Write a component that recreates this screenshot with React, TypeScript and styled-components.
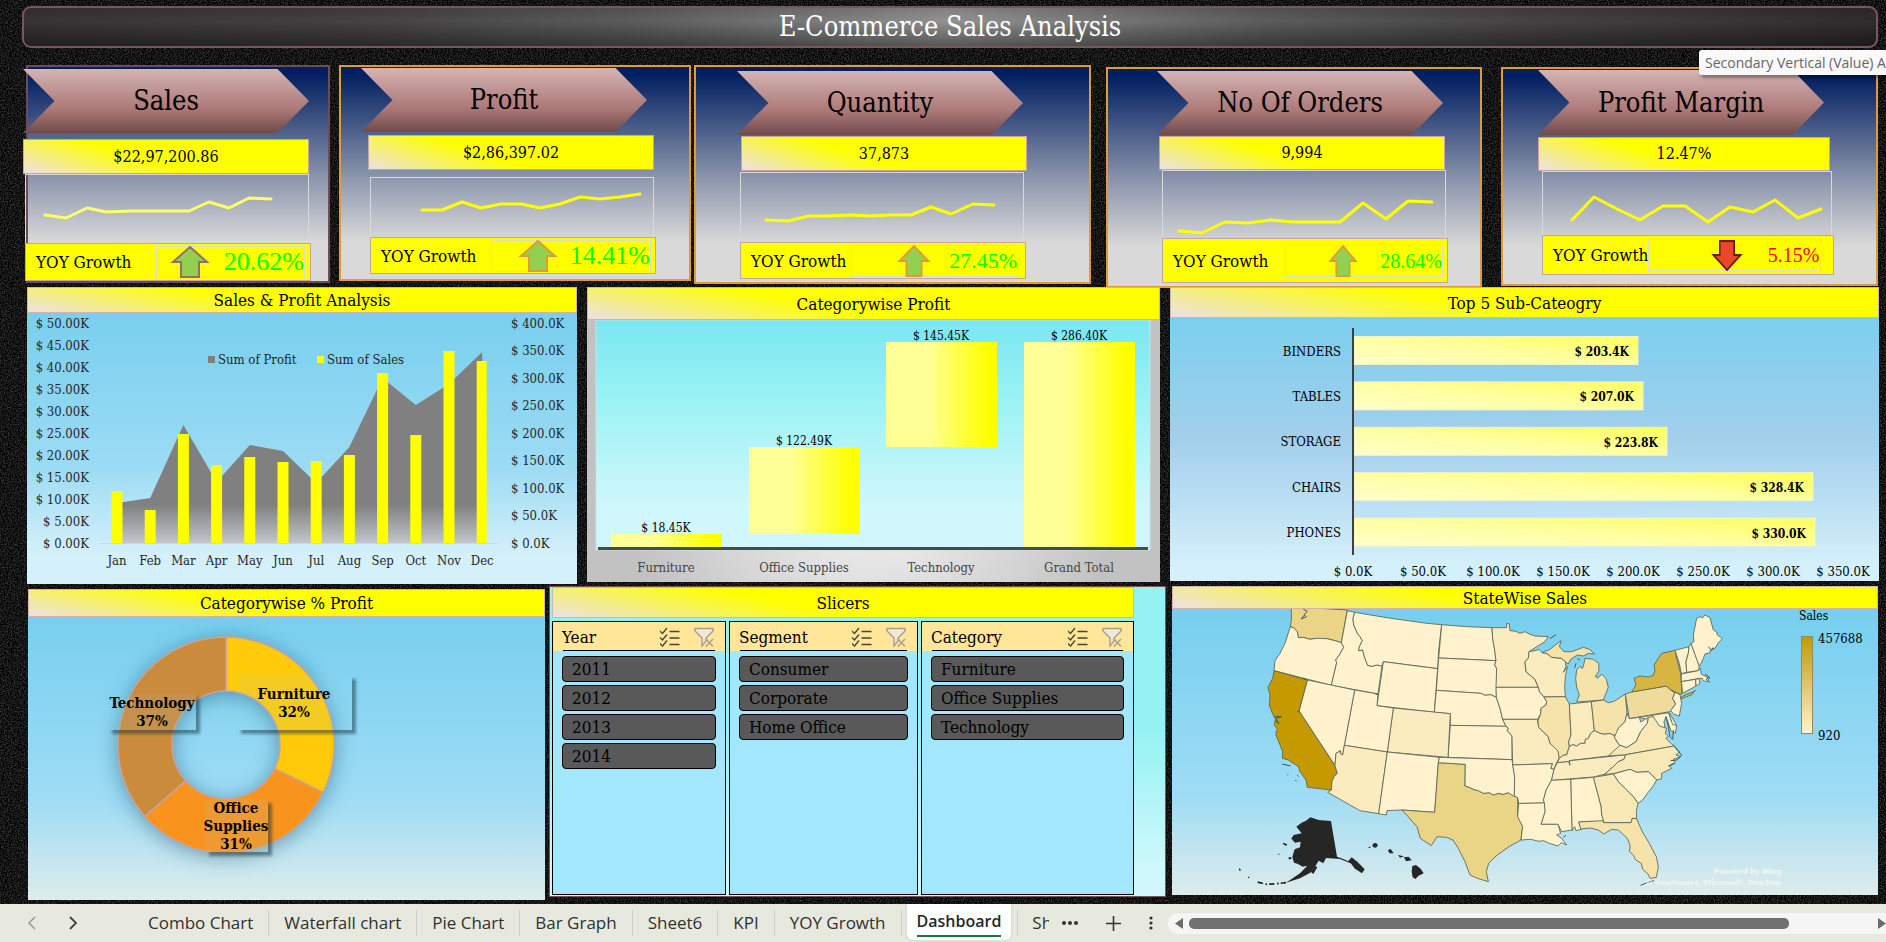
import React from "react";
import styled, { createGlobalStyle, css } from "styled-components";

const slab = `"DejaVu Serif Condensed", "DejaVu Serif", serif`;
const sans = `"Open Sans", "Noto Sans", sans-serif`;

const GlobalStyle = createGlobalStyle`
  *, *::before, *::after { box-sizing: border-box; }
  body { margin: 0; background: #131313; font-family: ${slab}; color: #000; }
  button { font: inherit; color: inherit; border: 0; padding: 0; background: none; cursor: pointer; }
  h1, h2, h3, p { margin: 0; font-weight: 400; }
  svg { display: block; }
  svg text { font-family: ${slab}; dominant-baseline: central; }
`;

const Page = styled.div`
  position: relative;
  min-height: 100vh;
  display: flex;
  flex-direction: column;
  padding-top: 6px;
  overflow: hidden;
  isolation: isolate;
`;

const Texture = styled.svg`
  position: absolute;
  inset: 0;
  width: 100%;
  height: 100%;
  z-index: -1;
`;

const Banner = styled.h1`
  height: 42px;
  margin: 0 8px 17px 22px;
  display: flex;
  align-items: center;
  justify-content: center;
  border: 2px solid #7d5559;
  border-radius: 9px;
  color: #fff;
  font-size: 27px;
  line-height: 32px;
  background:
    linear-gradient(180deg, rgba(0, 0, 0, 0.12), rgba(0, 0, 0, 0) 35%, rgba(0, 0, 0, 0.4)),
    linear-gradient(90deg, #353334, #434142 18%, #5c5c5c 33%, #929292 50%, #5c5c5c 67%, #434142 82%, #2e2c2d);
`;

const yellowFill = (angle: number) => `linear-gradient(${angle}deg, #ece0e4 0%, #ffff00 42%)`;

/* ---------- KPI cards ---------- */

const KpiRow = styled.section`
  display: grid;
  grid-template-columns: 304fr 9fr 352fr 3fr 397fr 15fr 376fr 19fr 377fr;
  align-items: start;
  height: 222px;
  padding: 0 8px 0 26px;
`;

const Card = styled.article<{ $column: number; $low?: boolean; $accent: string; $rows: string; $inset: number }>`
  grid-column: ${(p) => p.$column};
  margin-top: ${(p) => (p.$low ? 2 : 0)}px;
  display: grid;
  grid-template-rows: ${(p) => p.$rows};
  padding-left: ${(p) => Math.max(p.$inset, 0)}px;
  border: 2px solid ${(p) => p.$accent};
  background: linear-gradient(180deg, #001e60 3%, #8c96ad 52%, #d9d9d9 82%);
`;

const Arrow = styled.h2<{ $shift: number }>`
  grid-row: 2;
  width: 286px;
  margin-left: ${(p) => p.$shift}px;
  display: flex;
  align-items: center;
  justify-content: center;
  font-size: 27px;
  line-height: 32px;
  clip-path: polygon(0 0, 89% 0, 100% 50%, 89% 100%, 0 100%, 11% 50%);
  background: linear-gradient(180deg, #d5b4b3 0%, #aa7776 64%, #6f4b4a 100%);
`;

const Value = styled.p<{ $shift: number; $width: number }>`
  grid-row: 4;
  width: ${(p) => p.$width}px;
  margin-left: ${(p) => p.$shift}px;
  display: flex;
  align-items: center;
  justify-content: center;
  border: 1px solid #c9a3a3;
  font-size: 16px;
  line-height: 20px;
  background: ${yellowFill(18)};
`;

const Spark = styled.svg<{ $shift: number; $width: number }>`
  grid-row: 6;
  width: ${(p) => p.$width - 2}px;
  height: 100%;
  margin-left: ${(p) => p.$shift}px;
  border: 1px solid #d9d9d9;
  border-bottom: 0;
  overflow: visible;
`;

const Growth = styled.div<{ $shift: number; $width: number }>`
  grid-row: 7;
  width: ${(p) => p.$width}px;
  margin-left: ${(p) => p.$shift}px;
  display: flex;
  align-items: center;
  padding-left: 10px;
  border: 1px solid #c9a3a3;
  background: #ffff00;
  font-size: 17px;
  line-height: 20px;
  white-space: nowrap;
`;

const GrowthFrame = styled.div<{ $width: number; $end: number; $gap: number }>`
  flex: none;
  width: ${(p) => p.$width}px;
  height: 32px;
  margin: 0 ${(p) => p.$end}px 0 auto;
  display: flex;
  align-items: center;
  justify-content: flex-end;
  gap: ${(p) => p.$gap}px;
  border: 1px solid #dcdcd0;
`;

const Percent = styled.span<{ $down?: boolean; $size: number }>`
  font-family: "Liberation Serif", serif;
  font-size: ${(p) => p.$size}px;
  line-height: 32px;
  color: ${(p) => (p.$down ? "#ff0000" : "#00ff00")};
`;

type Kpi = {
  title: string;
  value: string;
  growth: string;
  down?: boolean;
  column: number;
  low?: boolean;
  accent: string;
  rows: string;
  inset: number;
  arrowShift: number;
  valueShift: number;
  bodyShift: number;
  width: number;
  points: string;
  line?: string;
  frame: [number, number, number];
  size: number;
  arrowWidth: number;
  arrowEdge: string;
};

const kpis: Kpi[] = [
  {
    title: "Sales", value: "$22,97,200.86", growth: "20.62%", column: 1, accent: "#6b4c58",
    rows: "2px 64px 6px 35px 0 69px 38px", inset: 0, arrowShift: -5, valueShift: -5, bodyShift: -3, width: 286,
    points: "19,40 40,43 61,33 80,37 105,36 163,36 183,27 203,33 223,23 245,24", line: "#ffff66",
    frame: [149, 5, 14], size: 26, arrowWidth: 40, arrowEdge: "#9a6a72",
  },
  {
    title: "Profit", value: "$2,86,397.02", growth: "14.41%", column: 3, accent: "#df9a3a",
    rows: "1px 64px 3px 35px 7px 60px 37px 5px", inset: 20, arrowShift: 0, valueShift: 7, bodyShift: 9, width: 286,
    points: "51,32 71,32 91,24 110,30 130,26 150,26 169,30 189,26 209,19 229,21 249,19 269,16",
    frame: [160, 4, 12], size: 26, arrowWidth: 40, arrowEdge: "#df9a3a",
  },
  {
    title: "Quantity", value: "37,873", growth: "27.45%", column: 5, accent: "#df9a3a",
    rows: "4px 64px 1px 35px 1px 70px 37px 3px", inset: 41, arrowShift: 0, valueShift: 4, bodyShift: 3, width: 286,
    points: "25,47 47,48 68,43 88,43 109,42 129,43 149,42 170,42 190,34 210,41 232,31 253,32",
    frame: [167, 7, 18], size: 22, arrowWidth: 34, arrowEdge: "#df9a3a",
  },
  {
    title: "No Of Orders", value: "9,994", growth: "28.64%", column: 7, low: true, accent: "#df9a3a",
    rows: "2px 64px 1px 34px 0 68px 45px 3px", inset: 49, arrowShift: 0, valueShift: 2, bodyShift: 5, width: 286,
    points: "16,60 39,62 62,51 85,52 108,49 130,51 177,51 200,32 223,48 245,30 269,31",
    frame: [158, 4, 22], size: 20, arrowWidth: 30, arrowEdge: "#df9a3a",
  },
  {
    title: "Profit Margin", value: "12.47%", growth: "5.15%", down: true, column: 9, low: true, accent: "#df9a3a",
    rows: "1px 65px 2px 34px 0 64px 40px 9px", inset: 35, arrowShift: 0, valueShift: 0, bodyShift: 4, width: 292,
    points: "29,48 51,25 74,37 97,48 120,34 142,34 165,50 187,35 210,40 232,28 255,46 278,37",
    frame: [172, 22, 25], size: 20, arrowWidth: 32, arrowEdge: "#6b1a10",
  },
];

function TrendArrow({ down, width, edge }: { down?: boolean; width: number; edge: string }) {
  return (
    <svg width={width} height={32} viewBox="0 0 40 32" preserveAspectRatio="none" aria-hidden="true">
      <path
        d={down ? "M11 2H29V16H37L20 31L3 16H11Z" : "M20 1L37 16H29V31H11V16H3Z"}
        fill={down ? "#e8472a" : "#92d050"}
        stroke={edge}
        strokeWidth={2}
      />
    </svg>
  );
}

function KpiCard({ kpi }: { kpi: Kpi }) {
  const [width, end, gap] = kpi.frame;
  return (
    <Card $column={kpi.column} $low={kpi.low} $accent={kpi.accent} $rows={kpi.rows} $inset={kpi.inset}>
      <Arrow $shift={kpi.arrowShift}>{kpi.title}</Arrow>
      <Value $shift={kpi.valueShift} $width={kpi.width}>{kpi.value}</Value>
      <Spark $shift={kpi.bodyShift} $width={kpi.width} role="img" aria-label={`${kpi.title} by month`}>
        <polyline points={kpi.points} fill="none" stroke={kpi.line ?? "#ffff00"} strokeWidth={3} strokeLinejoin="round" strokeLinecap="round" />
      </Spark>
      <Growth $shift={kpi.bodyShift} $width={kpi.width}>
        YOY Growth
        <GrowthFrame $width={width} $end={end} $gap={gap}>
          <TrendArrow down={kpi.down} width={kpi.arrowWidth} edge={kpi.arrowEdge} />
          <Percent $down={kpi.down} $size={kpi.size}>{kpi.growth}</Percent>
        </GrowthFrame>
      </Growth>
    </Card>
  );
}

/* ---------- Panels ---------- */

const ChartRow = styled.section`
  display: grid;
  grid-template-columns: 550fr 573fr 709fr;
  column-gap: 10px;
  align-items: start;
  padding: 0 7px 0 27px;
`;

const LowerRow = styled.section`
  display: grid;
  grid-template-columns: 517fr 4fr 617fr 6fr 706fr;
  align-items: start;
  padding: 2px 8px 4px 28px;
  & > :nth-child(1) { grid-column: 1; margin-top: 3px; }
  & > :nth-child(2) { grid-column: 3; }
  & > :nth-child(3) { grid-column: 5; }
`;

const tones = {
  sky: "linear-gradient(180deg, #78cfee 8%, #9bdbf4 60%, #d4f0fa 90%)",
  mist: "linear-gradient(180deg, #76cfee 8%, #9fdcf5 68%, #deecec 100%)",
  steel: "linear-gradient(180deg, #7acfee 10%, #a3cfec 52%, #d4f0fa 95%)",
  silver: "radial-gradient(circle at 50% 60%, #ececec 20%, #c2c2c2 75%)",
};

const Panel = styled.section<{ $tone: keyof typeof tones }>`
  min-width: 0;
  background: ${(p) => tones[p.$tone]};
`;

const PanelTitle = styled.h2<{ $height: number }>`
  height: ${(p) => p.$height}px;
  display: flex;
  align-items: center;
  justify-content: center;
  border: 1px solid #d3b3ac;
  font-size: 17px;
  line-height: 20px;
  background: ${yellowFill(11)};
`;

const Chart = styled.svg`
  width: 100%;
  height: auto;
  overflow: hidden;
`;

const months = ["Jan", "Feb", "Mar", "Apr", "May", "Jun", "Jul", "Aug", "Sep", "Oct", "Nov", "Dec"];
const salesTop = [491, 510, 434, 465, 457, 462, 461, 455, 373, 435, 351, 361];
const profitTop = [503, 498, 425, 482, 445, 451, 483, 447, 378, 405, 384, 352];
const monthX = (i: number) => 117 + i * 33.2;

function ComboChart() {
  const area = profitTop.map((y, i) => `${monthX(i)},${y}`).join(" ");
  return (
    <Chart viewBox="27 313 550 271" role="img" aria-label="Sales and profit by month">
      <defs>
        <linearGradient id="area" x1="0" y1="0" x2="0" y2="1">
          <stop offset="0.8" stopColor="#808080" />
          <stop offset="1" stopColor="#c2c6ca" />
        </linearGradient>
      </defs>
      <g fontSize="13" fill="#262626">
        {Array.from({ length: 11 }, (_, i) => (
          <text key={i} x="89" y={323 + i * 22} textAnchor="end">{`$ ${(50 - i * 5).toFixed(2)}K`}</text>
        ))}
        {Array.from({ length: 9 }, (_, i) => (
          <text key={i} x="511" y={323 + i * 27.5}>{`$ ${(400 - i * 50).toFixed(1)}K`}</text>
        ))}
        {months.map((m, i) => (
          <text key={m} x={monthX(i)} y="560" textAnchor="middle">{m}</text>
        ))}
        <text x="218" y="359">Sum of Profit</text>
        <text x="327" y="359">Sum of Sales</text>
      </g>
      <rect x="208" y="356" width="7" height="7" fill="#7f7f7f" />
      <rect x="317" y="356" width="7" height="7" fill="#ffff00" />
      <polygon points={`${monthX(0)},543 ${area} ${monthX(11)},543`} fill="url(#area)" />
      <path d="M99 543.5H498" stroke="#cfd8dc" />
      {salesTop.map((y, i) => (
        <rect key={i} x={monthX(i) - 5.5} y={y} width={i === 11 ? 10 : 11} height={543 - y} fill="#ffff00" />
      ))}
    </Chart>
  );
}

const falls = [
  { name: "Furniture", label: "$ 18.45K", x: 611, top: 534, bottom: 547 },
  { name: "Office Supplies", label: "$ 122.49K", x: 749, top: 447, bottom: 534 },
  { name: "Technology", label: "$ 145.45K", x: 886, top: 342, bottom: 447 },
  { name: "Grand Total", label: "$ 286.40K", x: 1024, top: 342, bottom: 547 },
];

function WaterfallChart() {
  return (
    <Chart viewBox="587 320 573 262" role="img" aria-label="Profit by category">
      <defs>
        <linearGradient id="plot" x1="0" y1="0" x2="0" y2="1">
          <stop offset="0" stopColor="#7ae6f2" />
          <stop offset="0.32" stopColor="#98f2f3" />
          <stop offset="0.8" stopColor="#cff7fc" />
        </linearGradient>
        <linearGradient id="fall">
          <stop offset="0.38" stopColor="#ffff96" />
          <stop offset="0.92" stopColor="#ffff00" />
        </linearGradient>
      </defs>
      <rect x="596" y="320" width="554" height="230" fill="url(#plot)" stroke="#c9e4e8" />
      {falls.map((f) => (
        <g key={f.name} textAnchor="middle">
          <rect x={f.x} y={f.top} width="111" height={f.bottom - f.top} fill="url(#fall)" />
          <text x={f.x + 55} y={f.top - 6} fontSize="12">{f.label}</text>
          <text x={f.x + 55} y="567" fontSize="13" fill="#454545">{f.name}</text>
        </g>
      ))}
      <path d="M598 548.5H1148" stroke="#434b4b" strokeWidth="3" />
    </Chart>
  );
}

const subs = [
  { name: "BINDERS", label: "$ 203.4K", end: 1638 },
  { name: "TABLES", label: "$ 207.0K", end: 1643 },
  { name: "STORAGE", label: "$ 223.8K", end: 1667 },
  { name: "CHAIRS", label: "$ 328.4K", end: 1813 },
  { name: "PHONES", label: "$ 330.0K", end: 1815 },
];

function BarChart() {
  return (
    <Chart viewBox="1170 318 709 263" role="img" aria-label="Top five sub-categories">
      <defs>
        <linearGradient id="bar" x1="0" y1="1" x2="1" y2="0">
          <stop offset="0" stopColor="#ffffcc" />
          <stop offset="0.5" stopColor="#ffffa0" />
          <stop offset="1" stopColor="#ffff5a" />
        </linearGradient>
      </defs>
      {subs.map((s, i) => (
        <g key={s.name}>
          <rect x="1354" y={336.5 + i * 45.4} width={s.end - 1354} height="28" fill="url(#bar)" stroke="#f2f2c8" />
          <text x="1341" y={351 + i * 45.4} fontSize="13" textAnchor="end">{s.name}</text>
          <text x={s.end - 9} y={352 + i * 45.4} fontSize="12" textAnchor="end" fontWeight="700">{s.label}</text>
        </g>
      ))}
      <path d="M1353 328V555" stroke="#404040" strokeWidth="2" />
      {Array.from({ length: 8 }, (_, i) => (
        <text key={i} x={1353 + i * 70} y="571" fontSize="13" textAnchor="middle">{`$ ${(i * 50).toFixed(1)}K`}</text>
      ))}
    </Chart>
  );
}

/* ---------- Donut ---------- */

const polar = (r: number, deg: number) => {
  const a = ((deg - 90) * Math.PI) / 180;
  return `${226 + r * Math.cos(a)} ${745 + r * Math.sin(a)}`;
};
const slice = (from: number, to: number) =>
  `M${polar(108, from)}A108 108 0 0 1 ${polar(108, to)}L${polar(54, to)}A54 54 0 0 0 ${polar(54, from)}Z`;

const callouts = [
  { x: 237, y: 675, w: 115, h: 55, lines: ["Furniture", "32%"], first: 694, tx: 294 },
  { x: 108, y: 694, w: 88, h: 36, lines: ["Technology", "37%"], first: 703, tx: 152 },
  { x: 205, y: 799, w: 63, h: 53, lines: ["Office", "Supplies", "31%"], first: 808, tx: 236 },
];

function Donut() {
  return (
    <Chart viewBox="28 617 517 283" role="img" aria-label="Share of profit by category">
      <defs>
        <filter id="glow" x="-30%" y="-30%" width="160%" height="160%"><feGaussianBlur stdDeviation="10" /></filter>
        <filter id="edge" x="-20%" y="-20%" width="140%" height="140%"><feGaussianBlur stdDeviation="1.500" /></filter>
      </defs>
      <circle cx="226" cy="748" r="81" fill="none" stroke="#24506a" strokeOpacity="0.5" strokeWidth="56" filter="url(#glow)" />
      <g stroke="#c7a49c" strokeWidth="1.5">
        <path d={slice(0, 116)} fill="#ffca0a" />
        <path d={slice(116, 228.6)} fill="#f8931d" />
        <path d={slice(228.6, 360)} fill="#ca8b3c" />
      </g>
      {callouts.map((c) => (
        <g key={c.lines[0]}>
          <clipPath id={`around-${c.x}`}>
            <path clipRule="evenodd" d={`M${c.x - 10} ${c.y - 10}h${c.w + 30}v${c.h + 30}h${-c.w - 30}ZM${c.x} ${c.y}v${c.h}h${c.w}v${-c.h}Z`} />
          </clipPath>
          <g clipPath={`url(#around-${c.x})`}>
            <rect x={c.x + 4} y={c.y + 4} width={c.w} height={c.h} fill="#14303c" fillOpacity="0.5" filter="url(#edge)" />
          </g>
          <rect x={c.x} y={c.y} width={c.w} height={c.h} fill="#8fd6f2" fillOpacity="0.1" />
          {c.lines.map((l, i) => (
            <text key={l} x={c.tx} y={c.first + i * 18} fontSize="15" fontWeight="700" textAnchor="middle">{l}</text>
          ))}
        </g>
      ))}
    </Chart>
  );
}

/* ---------- Slicers ---------- */

const SlicerPanel = styled.section`
  height: 311px;
  padding: 0 31px 0 2px;
  border: 1px solid #7d5559;
  background: linear-gradient(180deg, #94f2f3 45%, #d0f8fc 92%);
`;

const SlicerGrid = styled.div`
  display: grid;
  grid-template-columns: 174fr 189fr 213fr;
  column-gap: 3px;
  margin-top: 3px;
`;

const Slicer = styled.fieldset`
  min-width: 0;
  height: 274px;
  margin: 0;
  padding: 0;
  border: 1px solid #000;
  background: #a3e7ff;
`;

const SlicerHead = styled.header`
  height: 29px;
  display: flex;
  align-items: center;
  gap: 14px;
  padding: 0 11px 0 9px;
  background: linear-gradient(#000, #000) center bottom / calc(100% - 20px) 1px no-repeat, #ffe699;
  h3 { flex: 1; font-size: 17px; line-height: 20px; }
`;

const Options = styled.div`
  display: grid;
  row-gap: 3px;
  padding: 5px 9px;
`;

const Option = styled.button`
  height: 26px;
  padding-left: 9px;
  border: 1px solid #000;
  border-radius: 4px;
  background: #595959;
  text-align: left;
  font-size: 17px;
  line-height: 20px;
`;

const slicers = [
  { name: "Year", options: ["2011", "2012", "2013", "2014"] },
  { name: "Segment", options: ["Consumer", "Corporate", "Home Office"] },
  { name: "Category", options: ["Furniture", "Office Supplies", "Technology"] },
];

function Slicers() {
  return (
    <SlicerPanel>
      <PanelTitle $height={31}>Slicers</PanelTitle>
      <SlicerGrid>
        {slicers.map((s) => (
          <Slicer key={s.name} aria-label={s.name}>
            <SlicerHead>
              <h3>{s.name}</h3>
              <button type="button" aria-label="Multi-select">
                <svg width="20" height="20" viewBox="0 0 20 20" fill="none" stroke="#4a4636" strokeWidth="1.4">
                  <path d="M0 4l2.500 2.500L7 1M0 10.500L2.500 13L7 7.500M0 16.500L2.500 19L7 13.500M9.500 4.500H19.500M9.500 11H19.500M9.500 17.500H19.500" />
                </svg>
              </button>
              <button type="button" aria-label="Clear filter">
                <svg width="20" height="20" viewBox="0 0 20 20" fill="none" stroke="#a8a290" strokeWidth="1.500">
                  <path d="M1 1.500H19V4L12 11V14L8 19V11L1 4Z" fill="#efe9d6" />
                  <path d="M12 12L19 19.500M19 12L12 19.500" />
                </svg>
              </button>
            </SlicerHead>
            <Options>
              {s.options.map((o) => (
                <Option key={o} type="button">{o}</Option>
              ))}
            </Options>
          </Slicer>
        ))}
      </SlicerGrid>
    </SlicerPanel>
  );
}

/* ---------- Map ---------- */

const shades = ["#fff2cc", "#fbecc0", "#f8e8b6", "#f5e3a9", "#efdc9d", "#ead586", "#d8b441", "#c49a00"];

/* [shade, outline]; outlines share one grid of thirds of a pixel */
const states: [number, string][] = [
  [5, "214,20 382,30 364,128 345,122 320,116 305,118 290,115 270,118 250,112 235,113 232,95 222,84 211,80 214,60"],
  [0, "211,80 222,84 232,95 235,113 250,112 270,118 290,115 320,116 345,122 364,128 371,142 358,165 347,180 350,188 334,256 162,212 165,182 180,160 195,130"],
  [0, "382,32 404,37 399,55 401,75 412,100 420,110 427,122 418,140 416,152 428,150 433,170 443,196 455,199 470,195 486,198 480,240 474,282 334,256 350,188 347,180 358,165 371,142 364,128"],
  [0, "404,37 500,53 620,70 665,74 656,150 653,206 490,185 486,198 470,195 455,199 443,196 433,170 428,150 416,152 418,140 427,122 420,110 412,100 401,75 399,55"],
  [0, "490,185 653,206 643,337 471,317"],
  [0, "665,74 740,80 816,83 818,115 824,150 828,182 656,174"],
  [0, "656,174 828,182 824,195 830,205 829,292 812,284 795,286 783,280 649,271"],
  [0, "649,271 783,280 795,286 812,284 829,292 840,325 848,358 858,379 691,376 691,341 643,337"],
  [0, "691,376 858,379 865,384 862,392 876,408 876,479 684,472"],
  [1, "520,324 691,341 684,472 502,456"],
  [0, "404,270 474,282 471,317 520,324 502,456 373,436"],
  [0, "262,240 404,270 373,436 368,465 360,460 362,452 348,460 345,497 237,333"],
  [7, "162,212 262,240 237,333 345,497 352,520 342,530 336,545 334,570 262,562 258,540 240,515 235,500 205,480 187,475 188,455 180,435 168,405 168,395 172,388 163,375 166,358 157,340 148,315 150,285 144,262 158,235"],
  [1, "373,436 502,456 476,641 420,632 323,577 334,570 336,545 342,530 352,520 345,497 348,460 362,452 360,460 368,465"],
  [0, "502,456 658,472 655,488 644,637 545,630 501,632 499,645 476,641"],
  [5, "655,488 736,493 735,558 748,562 760,568 775,572 790,580 808,578 820,585 835,580 850,583 865,578 893,593 893,650 903,668 908,680 905,700 903,720 870,738 828,768 806,790 799,815 805,845 772,835 750,825 735,785 715,745 699,720 679,712 651,710 634,737 601,715 591,680 560,645 545,630 644,637"],
  [0, "658,472 876,479 879,495 884,530 883,590 865,578 850,583 835,580 820,585 808,578 790,580 775,572 760,568 748,562 735,558 736,493 655,488"],
  [1, "816,83 860,83 860,70 868,72 870,92 888,94 900,100 915,95 930,103 945,108 985,110 975,125 950,140 927,155 925,175 915,185 918,215 945,238 955,262 828,262 830,205 824,195 828,182 824,150 818,115"],
  [1, "927,155 945,152 958,148 966,158 980,160 995,172 1025,175 1036,185 1038,200 1030,217 1042,200 1036,230 1034,260 1036,290 972,291 958,275 955,262 945,238 918,215 915,185 925,175"],
  [3, "966,158 990,148 1023,122 1018,140 1032,155 1055,155 1090,142 1108,148 1124,162 1105,160 1090,168 1072,165 1052,178 1045,192 1036,185 1025,175 995,172 980,160"],
  [3, "1095,175 1120,178 1136,190 1137,212 1126,230 1134,234 1145,222 1158,235 1165,262 1150,300 1070,306 1078,285 1070,262 1067,235 1070,210 1080,200 1088,205 1092,190"],
  [0, "828,262 955,262 958,275 972,291 980,305 978,315 963,325 962,342 952,358 848,358 840,325 829,292"],
  [1, "848,358 952,358 956,382 985,410 990,430 1008,440 1016,455 1018,472 1008,492 1002,508 992,505 997,491 878,495 876,408 862,392 865,384 858,379"],
  [3, "972,291 1036,290 1048,312 1053,405 1046,425 1048,440 1040,465 1030,466 1018,475 1014,453 990,430 985,410 956,382 954,362 962,342 963,325 978,315 980,305"],
  [1, "1048,312 1114,305 1123,392 1112,400 1105,415 1096,418 1095,430 1082,430 1070,438 1058,434 1048,440 1046,425 1053,405"],
  [3, "1114,305 1150,300 1165,308 1180,305 1192,298 1216,282 1221,340 1215,365 1195,385 1192,402 1182,406 1168,400 1155,403 1140,400 1123,392"],
  [1, "1048,440 1058,434 1070,438 1082,430 1095,430 1096,418 1105,415 1112,400 1123,392 1140,400 1155,403 1168,400 1182,406 1190,425 1200,436 1180,460 1165,468 1048,482 1050,496 1046,485 1012,488 1018,475 1030,466 1040,465"],
  [1, "1012,488 1046,485 1050,496 1048,482 1165,470 1217,464 1212,478 1195,485 1180,500 1153,523 1120,531 994,541 1002,508"],
  [4, "1216,282 1235,276 1340,258 1352,270 1365,278 1358,295 1367,312 1350,335 1228,356"],
  [6, "1235,276 1248,255 1242,235 1260,228 1285,231 1300,226 1305,210 1302,195 1315,175 1325,160 1365,151 1370,175 1382,220 1386,282 1378,282 1352,270 1340,258"],
  [6, "1382,292 1400,283 1420,276 1426,270 1416,284 1382,297"],
  [0, "1352,270 1380,284 1385,310 1378,348 1362,343 1352,332 1367,312 1358,295 1365,278"],
  [0, "1258,352 1346,338 1355,365 1370,378 1366,400 1352,392 1346,372 1338,350 1332,365 1336,390 1310,375 1300,350 1280,358"],
  [0, "1346,338 1352,345 1370,376 1358,374"],
  [0, "1221,340 1228,356 1258,352 1262,366 1285,352 1282,370 1272,382 1262,395 1248,425 1220,443 1198,435 1183,412 1195,385 1215,365"],
  [2, "1285,352 1300,350 1318,378 1340,385 1336,400 1345,408 1338,415 1352,430 1363,438 1217,464 1165,468 1200,436 1220,443 1248,425 1262,395 1272,382 1282,370"],
  [2, "1217,464 1363,438 1378,456 1368,465 1382,470 1360,478 1365,490 1348,498 1355,505 1325,520 1325,536 1310,540 1285,515 1250,517 1230,508 1180,521 1153,523 1180,500 1195,485 1212,478"],
  [0, "1180,522 1230,508 1250,517 1285,515 1310,540 1298,560 1282,580 1268,600 1254,610 1240,590 1215,565 1195,545"],
  [2, "1120,532 1180,522 1195,545 1215,565 1240,590 1254,610 1249,635 1250,656 1237,655 1233,668 1151,668 1145,645 1143,620"],
  [0, "1052,538 1120,532 1143,620 1145,645 1151,664 1076,666 1084,688 1068,692 1064,680 1056,692"],
  [0, "994,541 1052,538 1056,690 1025,695 1014,673 963,673 975,635 970,600 978,570"],
  [0, "896,610 973,608 975,635 963,673 1014,673 1022,700 1010,705 1025,715 1040,735 1024,728 1014,738 988,730 970,722 957,724 932,718 903,720 908,680 893,650"],
  [0, "878,495 997,491 992,505 1002,508 994,541 978,570 970,600 973,608 896,610 893,593 883,588 884,530"],
  [3, "1076,666 1147,662 1151,668 1233,668 1237,655 1250,656 1258,675 1267,695 1288,730 1298,750 1309,770 1315,800 1309,832 1290,835 1284,822 1268,808 1264,790 1247,780 1240,765 1229,755 1230,735 1222,715 1195,690 1175,688 1151,702 1135,690 1110,684 1082,687"],
  [0, "1365,151 1407,140 1405,160 1398,185 1400,217 1384,221 1378,190"],
  [0, "1407,140 1413,130 1430,175 1438,200 1435,212 1400,217 1398,185 1405,160"],
  [0, "1413,130 1422,125 1420,105 1430,55 1440,50 1447,54 1455,45 1470,53 1480,90 1490,96 1492,105 1507,115 1495,128 1485,145 1472,148 1470,158 1455,162 1450,175 1438,200"],
  [0, "1384,222 1435,212 1442,205 1443,222 1455,228 1468,235 1460,245 1450,242 1445,234 1384,245"],
  [0, "1384,245 1427,238 1428,258 1388,280"],
  [0, "1427,238 1437,236 1440,250 1428,258"],
];

const alaska =
  "M258 662L271 652 296 660 333 663 351 770 372 778 384 784 395 772 412 785 434 808 426 820 405 806 392 790 360 777 318 774 310 790 296 782 285 800 271 818 240 835 198 848 240 820 262 797 248 800 234 792 222 788 217 770 224 748 240 742 242 725 225 728 214 716 221 705 245 700 229 680 245 668Z";

function StateMap() {
  return (
    <Chart viewBox="1172 609 706 286" role="img" aria-label="Sales by state">
      <defs>
        <linearGradient id="scale" x1="0" y1="0" x2="0" y2="1">
          <stop offset="0" stopColor="#c49a00" />
          <stop offset="1" stopColor="#fff2cc" />
        </linearGradient>
      </defs>
      <g transform="translate(1220 600) scale(0.33333)">
        <g stroke="#5b6658" strokeWidth="2.600" strokeLinejoin="round">
          {states.map(([shade, points], i) => (
            <polygon key={i} points={points} fill={shades[shade]} />
          ))}
        </g>
        <g fill="none" stroke="#3c5a5e" strokeWidth="3">
          <path d="M250 28L262 34 252 44 259 50 244 57 252 46M163 350L184 350 168 355 177 372 167 362M250 236L258 238M186 492L212 498M202 524h3M226 540l3 4M232 526l4 3M466 282l8 2M232 335l6 -3" />
          <path d="M990 116L1008 104M1068 190L1064 204M1080 180L1072 176M1338 350L1346 385 1350 410 1358 418 1360 390M1472 148L1465 140M1475 152L1480 142M1455 222L1468 232 1458 238 1470 248M1363 440L1385 465 1372 480 1352 482M1345 498L1362 490M1030 712L1038 706M1262 856L1280 848 1302 842" />
        </g>
        <g fill="#262626">
          <path d={alaska} />
          <path d="M272 815L286 798 292 802 280 822Z M190 728L202 733 198 738 188 731Z M206 772h8v6h-8Z" />
          <path d="M198 848L170 851 140 853 112 846" fill="none" stroke="#262626" strokeWidth="5" strokeDasharray="16 6 5 8" />
          <path d="M84 832h4M58 806l3 6M175 763h3" stroke="#262626" strokeWidth="4" />
          <path d="M458 732L468 728 474 736 468 743 458 741Z M504 750L512 747 521 760 508 760Z M534 765L552 769 540 773Z M552 772L566 770 575 781 558 784Z M446 740h5v4h-5Z" />
          <path d="M577 798L588 795 602 806 611 820 596 827 586 837 578 832 575 815Z" />
        </g>
      </g>
      <text x="1799" y="616" fontSize="12">Sales</text>
      <rect x="1801.500" y="636.500" width="11" height="97" fill="url(#scale)" stroke="#8f8a68" />
      <text x="1818" y="638" fontSize="13">457688</text>
      <text x="1818" y="735" fontSize="13">920</text>
      <g fill="#f4f6f4" fontSize="8" fontWeight="700" textAnchor="end">
        <text x="1781" y="871">Powered by Bing</text>
        <text x="1781" y="882">© GeoNames, Microsoft, TomTom</text>
      </g>
    </Chart>
  );
}

/* ---------- Overlay and sheet tabs ---------- */

const Tooltip = styled.div`
  position: absolute;
  top: 50px;
  left: calc(100% - 187px);
  height: 25px;
  padding: 0 6px;
  border-radius: 3px;
  background: #f9f9f9;
  box-shadow: 2px 3px 3px rgba(0, 0, 0, 0.35);
  color: #666;
  font-family: ${sans};
  font-size: 14px;
  line-height: 25px;
  white-space: nowrap;
`;

const TabBar = styled.nav`
  height: 38px;
  margin-top: auto;
  display: flex;
  align-items: center;
  background: #e7e9de;
  color: #303030;
  font-family: ${sans};
  font-size: 17px;
  line-height: 22px;
`;

const NavArrows = styled.div`
  display: flex;
  gap: 31px;
  padding-left: 27px;
  width: 133px;
  flex: none;
`;

const Tab = styled.button<{ $active?: boolean }>`
  position: relative;
  flex: none;
  height: 26px;
  padding: 0 15px;
  border-right: 1px solid #c9cdd0;
  white-space: nowrap;
  ${(p) =>
    p.$active &&
    css`
      height: 36px;
      align-self: flex-start;
      margin: 0 6px 0 5px;
      padding: 0 10px;
      border: 0;
      border-radius: 0 0 6px 6px;
      background: #fff;
      color: #1f2a24;
      font-weight: 600;
      font-size: 16px;
      box-shadow: 0 0 3px rgba(0, 0, 0, 0.15);
      span { display: block; height: 29px; line-height: 27px; border-bottom: 2px solid #107c41; }
    `}
`;

const CutTab = styled.button`
  flex: none;
  width: 32px;
  height: 26px;
  padding-left: 14px;
  border-left: 1px solid #c9cdd0;
  overflow: hidden;
  text-align: left;
`;

const BarTools = styled.div`
  flex: none;
  display: flex;
  align-items: center;
  width: 119px;
  padding: 0 15px 0 13px;
  justify-content: space-between;
`;

const ScrollBar = styled.div`
  flex: 1;
  min-width: 0;
  height: 21px;
  display: grid;
  grid-template-columns: 8px 600fr 77fr 8px;
  column-gap: 6px;
  align-items: center;
  padding-left: 7px;
  border-radius: 10px 0 0 10px;
  background: #f5f5f5;
`;

const Thumb = styled.div`
  height: 11px;
  border-radius: 5px;
  background: #717171;
`;

const tabs = ["Combo Chart", "Waterfall chart", "Pie Chart", "Bar Graph", "Sheet6", "KPI", "YOY Growth"];

function SheetTabs() {
  return (
    <TabBar aria-label="Sheets">
      <NavArrows>
        <button type="button" aria-label="Previous sheet">
          <svg width="10" height="14" viewBox="0 0 10 14" fill="none" stroke="#9a9a94" strokeWidth="1.500"><path d="M8 1L2 7L8 13" /></svg>
        </button>
        <button type="button" aria-label="Next sheet">
          <svg width="10" height="14" viewBox="0 0 10 14" fill="none" stroke="#444" strokeWidth="1.800"><path d="M2 1L8 7L2 13" /></svg>
        </button>
      </NavArrows>
      {tabs.map((t) => (
        <Tab key={t} type="button">{t}</Tab>
      ))}
      <Tab type="button" $active><span>Dashboard</span></Tab>
      <CutTab type="button">Sheet</CutTab>
      <BarTools>
        <button type="button" aria-label="More sheets">
          <svg width="16" height="4" viewBox="0 0 16 4" fill="#333"><circle cx="2" cy="2" r="2" /><circle cx="8" cy="2" r="2" /><circle cx="14" cy="2" r="2" /></svg>
        </button>
        <button type="button" aria-label="New sheet">
          <svg width="15" height="15" viewBox="0 0 15 15" stroke="#333" strokeWidth="1.600"><path d="M7.500 0V15M0 7.500H15" /></svg>
        </button>
        <button type="button" aria-label="Options">
          <svg width="4" height="14" viewBox="0 0 4 14" fill="#333"><circle cx="2" cy="2" r="1.600" /><circle cx="2" cy="7" r="1.600" /><circle cx="2" cy="12" r="1.600" /></svg>
        </button>
      </BarTools>
      <ScrollBar>
        <svg width="8" height="11" viewBox="0 0 8 11" fill="#6b6b6b"><path d="M8 0V11L0 5.500Z" /></svg>
        <Thumb />
        <span />
        <svg width="8" height="11" viewBox="0 0 8 11" fill="#6b6b6b"><path d="M0 0V11L8 5.500Z" /></svg>
      </ScrollBar>
    </TabBar>
  );
}

export default function App() {
  return (
    <Page>
      <GlobalStyle />
      <Texture aria-hidden="true">
        <filter id="grain" colorInterpolationFilters="sRGB">
          <feTurbulence type="fractalNoise" baseFrequency="0.7" numOctaves="2" seed="4" />
          <feColorMatrix values="0.5 0 0 0 -0.17  0.5 0 0 0 -0.17  0.5 0 0 0 -0.17  0 0 0 0 1" />
        </filter>
        <rect width="100%" height="100%" filter="url(#grain)" />
      </Texture>
      <Banner>E-Commerce Sales Analysis</Banner>
      <KpiRow>
        {kpis.map((k) => (
          <KpiCard key={k.title} kpi={k} />
        ))}
      </KpiRow>
      <ChartRow>
        <Panel $tone="sky">
          <PanelTitle $height={26}>Sales &amp; Profit Analysis</PanelTitle>
          <ComboChart />
        </Panel>
        <Panel $tone="silver">
          <PanelTitle $height={33}>Categorywise Profit</PanelTitle>
          <WaterfallChart />
        </Panel>
        <Panel $tone="steel">
          <PanelTitle $height={31}>Top 5 Sub-Cateogry</PanelTitle>
          <BarChart />
        </Panel>
      </ChartRow>
      <LowerRow>
        <Panel $tone="mist">
          <PanelTitle $height={28}>Categorywise % Profit</PanelTitle>
          <Donut />
        </Panel>
        <Slicers />
        <Panel $tone="mist">
          <PanelTitle $height={23}>StateWise Sales</PanelTitle>
          <StateMap />
        </Panel>
      </LowerRow>
      <SheetTabs />
      <Tooltip role="tooltip">Secondary Vertical (Value) Axis</Tooltip>
    </Page>
  );
}
